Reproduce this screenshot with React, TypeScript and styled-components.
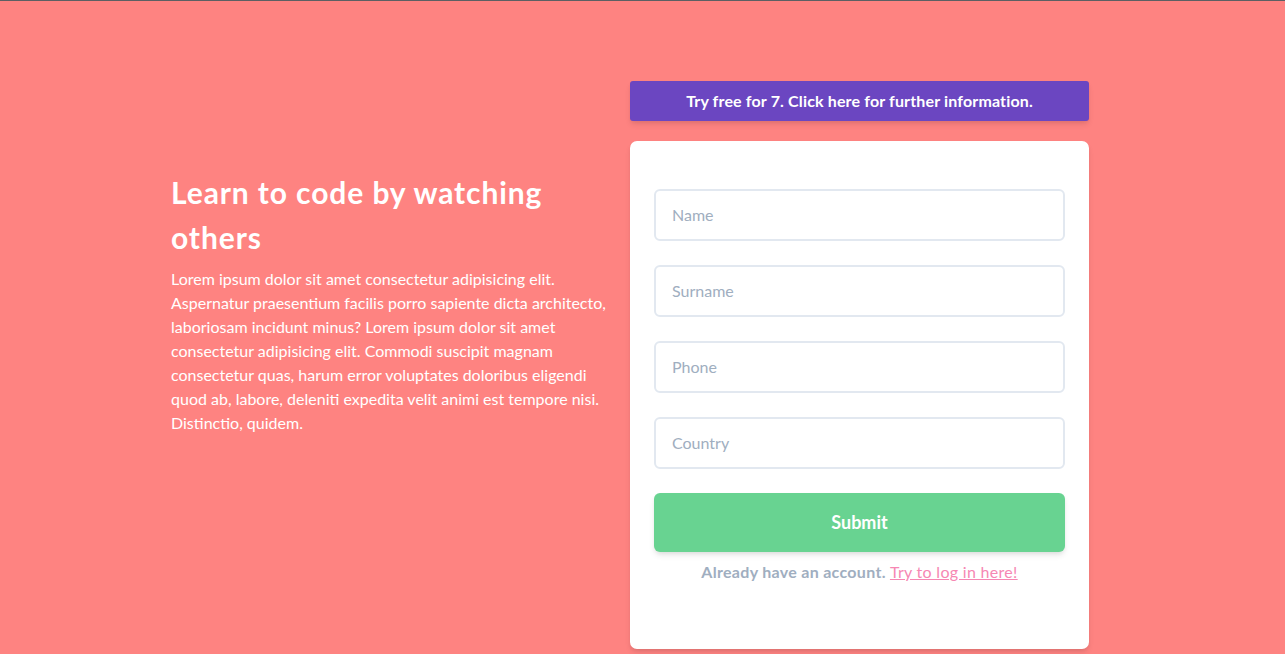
import React from "react";
import styled, { createGlobalStyle } from "styled-components";

const Global = createGlobalStyle`
  html, body { margin: 0; padding: 0; }
  body {
    background: #fe8381;
    font-family: Lato, "Open Sans", Arial, sans-serif;
  }
  * { box-sizing: border-box; }
`;

const Page = styled.div`
  min-height: 654px;
  background: #fe8381;
  border-top: 1px solid #5d5f63;
  padding: 80px 0 0 171px;
  display: flex;
  align-items: flex-start;
  gap: 19px;
`;

const Intro = styled.section`
  width: 440px;
  padding-top: 89px;
  color: #ffffff;
`;

const Title = styled.h1`
  margin: 0 0 7px;
  font-size: 30px;
  line-height: 45px;
  font-weight: 700;
  letter-spacing: 0.9px;
`;

const Text = styled.p`
  margin: 0;
  font-size: 16px;
  line-height: 24px;
`;

const Side = styled.div`
  width: 459px;
  display: flex;
  flex-direction: column;
  gap: 20px;
`;

const Banner = styled.div`
  height: 40px;
  padding-bottom: 1px;
  background: #6b46c1;
  color: #ffffff;
  border-radius: 3px;
  display: flex;
  align-items: center;
  justify-content: center;
  font-size: 16px;
  font-weight: 700;
  letter-spacing: 0.15px;
  box-shadow: 0 4px 6px -1px rgba(0, 0, 0, 0.1), 0 2px 4px -1px rgba(0, 0, 0, 0.06);
`;

const Card = styled.form`
  background: #ffffff;
  border-radius: 7px;
  padding: 48px 24px 65px;
  display: flex;
  flex-direction: column;
  gap: 24px;
  box-shadow: 0 4px 6px -1px rgba(0, 0, 0, 0.1), 0 2px 4px -1px rgba(0, 0, 0, 0.06);
`;

const Field = styled.input`
  height: 52px;
  width: 100%;
  border: 2px solid #e2e8f0;
  border-radius: 6px;
  padding: 0 16px 2px;
  font-family: inherit;
  font-size: 16px;
  color: #4a5568;
  outline: none;
  &::placeholder { color: #a0aec0; }
`;

const Submit = styled.button`
  height: 59px;
  width: 100%;
  border: none;
  border-radius: 6px;
  padding: 0 0 2px;
  background: #68d391;
  color: #ffffff;
  font-family: inherit;
  font-size: 18px;
  font-weight: 700;
  box-shadow: 0 4px 6px -1px rgba(0, 0, 0, 0.1), 0 2px 4px -1px rgba(0, 0, 0, 0.06);
  cursor: pointer;
`;

const Note = styled.p`
  margin: -16px 0 0;
  text-align: center;
  font-size: 16px;
  line-height: 24px;
  font-weight: 700;
  letter-spacing: 0.3px;
  color: #a0aec0;
`;

const Link = styled.a`
  color: #f687b3;
  font-weight: 400;
  text-decoration: underline;
`;

export default function App() {
  return (
    <>
      <Global />
      <Page>
        <Intro>
          <Title>Learn to code by watching others</Title>
          <Text>
            Lorem ipsum dolor sit amet consectetur adipisicing elit. Aspernatur praesentium facilis porro
            sapiente dicta architecto, laboriosam incidunt minus? Lorem ipsum dolor sit amet consectetur
            adipisicing elit. Commodi suscipit magnam consectetur quas, harum error voluptates doloribus
            eligendi quod ab, labore, deleniti expedita velit animi est tempore nisi. Distinctio, quidem.
          </Text>
        </Intro>
        <Side>
          <Banner>Try free for 7. Click here for further information.</Banner>
          <Card onSubmit={(e) => e.preventDefault()}>
            <Field placeholder="Name" />
            <Field placeholder="Surname" />
            <Field placeholder="Phone" />
            <Field placeholder="Country" />
            <Submit type="submit">Submit</Submit>
            <Note>
              Already have an account. <Link href="#">Try to log in here!</Link>
            </Note>
          </Card>
        </Side>
      </Page>
    </>
  );
}
